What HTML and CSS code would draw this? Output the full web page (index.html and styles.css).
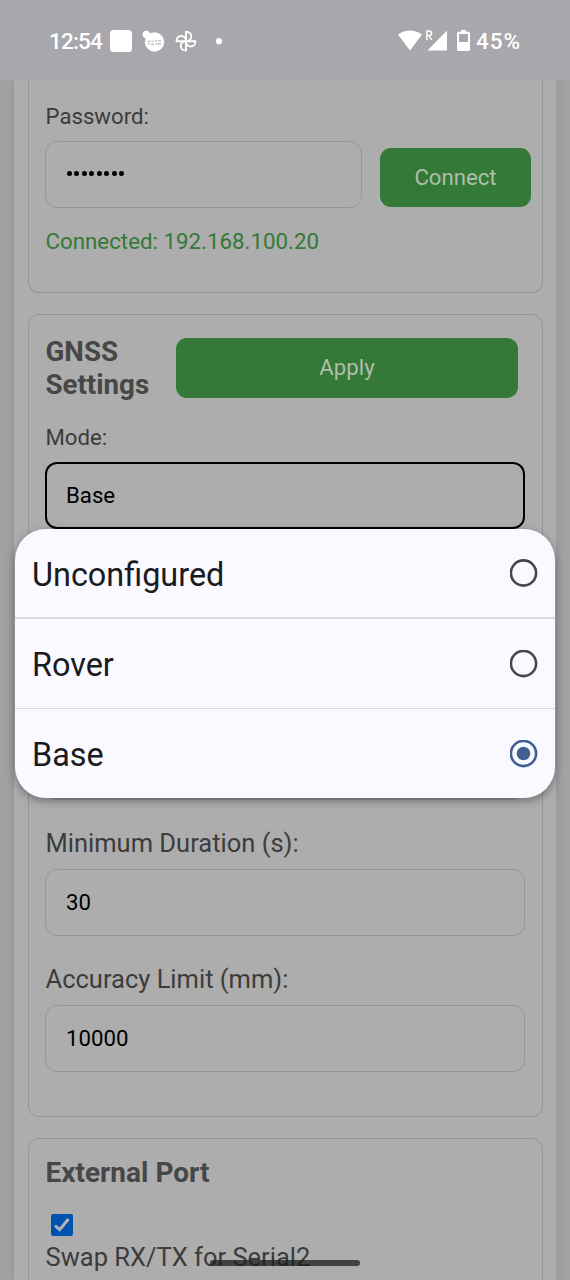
FILE: index.html
```html
<!DOCTYPE html>
<html lang="en">
<head>
<meta charset="utf-8">
<title>GNSS Settings</title>
<link rel="stylesheet" href="styles.css">
</head>
<body>
<div class="screen">
  <header class="status">
    <span class="clock">12:54</span>
    <svg class="notifications" width="120" height="30" viewBox="105 26 120 30" fill="#fff">
      <rect x="110" y="30" width="22" height="22" rx="3.5"/>
      <circle cx="154.500" cy="42" r="9.700"/>
      <circle cx="146.300" cy="34.500" r="3.700"/>
      <path d="M145 35L150 33L155 38L148 43Z"/>
      <path d="M147.500 41.200h3m1 0h2m1.500-.3h2m1 0h3M148 43.800h2m1 .4h3m1.500-.3h5.500" fill="none" stroke="#a8a7ac" stroke-width="1"/>
      <g fill="none" stroke="#fff" stroke-width="1.900" stroke-linejoin="round">
        <path d="M186 41.200V31.800C193 31.800 193 41.200 186 41.200Z"/>
        <path d="M186 41.200H195.400C195.400 48.200 186 48.200 186 41.200Z"/>
        <path d="M186 41.200V50.600C179 50.600 179 41.200 186 41.200Z"/>
        <path d="M186 41.200H176.600C176.600 34.200 186 34.200 186 41.200Z"/>
      </g>
      <circle cx="219" cy="41.200" r="3.100"/>
    </svg>
    <svg class="signals" width="75" height="30" viewBox="397 26 75 30" fill="#fff">
      <path d="M398 34.500Q410 26.500 422 34.500L410 50.500Z"/>
      <path d="M447 30.500V50.500H427.500Z"/>
      <path d="M426.900 40V31H429.200C432.300 31 432.300 35.500 429.200 35.500H426.900M429.200 35.500L431.600 40" fill="none" stroke="#fff" stroke-width="1.500"/>
      <path fill-rule="evenodd" d="M461 30H466V31.700H468.500Q470 31.700 470 33.200V49.500Q470 51 468.500 51H458.500Q457 51 457 49.500V33.200Q457 31.700 458.500 31.700H461ZM459 34V42H468V34Z"/>
    </svg>
    <span class="battery">45%</span>
  </header>

  <main class="panel">
    <section class="card card-wifi">
      <div class="label">Password:</div>
      <div class="connect-row">
        <div class="field password"><i></i><i></i><i></i><i></i><i></i><i></i><i></i><i></i></div>
        <div class="button connect">Connect</div>
      </div>
      <div class="connected">Connected: 192.168.100.20</div>
    </section>

    <section class="card card-gnss">
      <div class="title-row">
        <h2 class="title">GNSS Settings</h2>
        <div class="button apply">Apply</div>
      </div>
      <div class="label mode-label">Mode:</div>
      <div class="field focused">Base</div>
      <div class="field covered"></div>
      <div class="label wide">Minimum Duration (s):</div>
      <div class="field">30</div>
      <div class="label wide">Accuracy Limit (mm):</div>
      <div class="field">10000</div>
    </section>

    <section class="card card-port">
      <h2 class="title">External Port</h2>
      <svg class="checkbox" width="22" height="22" viewBox="0 0 22 22">
        <rect width="22" height="22" rx="2" fill="#0052ae"/>
        <path d="M4 11.700L8.700 15.700L17.500 5" fill="none" stroke="#b3b3b3" stroke-width="3"/>
      </svg>
      <div class="label swap">Swap RX/TX for Serial2</div>
    </section>
  </main>

  <div class="menu">
    <div class="option"><span>Unconfigured</span>
      <svg class="radio" width="28" height="28" viewBox="0 0 28 28"><circle cx="13.500" cy="14" r="12.600"/></svg></div>
    <div class="option"><span>Rover</span>
      <svg class="radio" width="28" height="28" viewBox="0 0 28 28"><circle cx="13.500" cy="13.500" r="12.600"/></svg></div>
    <div class="option"><span>Base</span>
      <svg class="radio selected" width="28" height="28" viewBox="0 0 28 28"><circle cx="13.500" cy="13.500" r="12.600"/><circle class="dot" cx="13.500" cy="13.500" r="6.800"/></svg></div>
  </div>
  <div class="nav-pill"></div>
</div>
</body>
</html>
```
FILE: styles.css
```css
* { box-sizing: border-box; }
body { margin: 0; font-family: Roboto, "Liberation Sans", sans-serif; }
.screen {
  position: relative;
  width: 570px;
  height: 1280px;
  overflow: hidden;
  background: #a2a2a2;
}
.status {
  position: relative;
  z-index: 1;
  display: flex;
  align-items: center;
  height: 80px;
  padding: 2px 48px 0 49px;
  background: #a8a7ac;
  color: #fff;
  font-size: 22.5px;
  font-weight: 500;
}
.clock { width: 56px; white-space: nowrap; letter-spacing: -.8px; }
.signals { margin-left: auto; }
.notifications, .signals { flex: none; }
.battery { width: 50px; padding-left: 4px; white-space: nowrap; letter-spacing: .9px; }
.panel {
  display: flex;
  flex-direction: column;
  gap: 21px;
  width: 542px;
  height: 1200px;
  margin-left: 14px;
  padding: 0 13px 0 14px;
  background: #adadad;
  box-shadow: 0 0 10px rgba(0, 0, 0, .1);
}
.card {
  flex: none;
  border: 1px solid #959595;
  border-radius: 11px;
  padding: 0 17px 0 16px;
}
.card-wifi { height: 213px; border-top: 0; border-radius: 0 0 11px 11px; padding-top: 23px; }
.card-gnss { height: 803px; padding-top: 20px; }
.card-port { height: 200px; padding-top: 17px; }
.label { height: 26px; line-height: 26px; padding-left: .5px; font-size: 22.2px; color: #3c3c3c; white-space: nowrap; }
.label.wide { height: 30px; line-height: 30px; font-size: 25.5px; margin: 28px 0 11px; }
.field {
  display: flex;
  align-items: center;
  height: 67px;
  padding: 0 0 2px 20px;
  border: 1px solid #959595;
  border-radius: 12px;
  font-size: 22.2px;
  color: #000;
}
.connect-row { display: flex; align-items: flex-end; gap: 18px; width: 486px; margin-top: 12px; }
.password { width: 317px; gap: 2.800px; padding-left: 21px; }
.password i { width: 4.700px; height: 4.700px; border-radius: 50%; background: #000; }
.button {
  display: flex;
  align-items: center;
  justify-content: center;
  padding-bottom: 2px;
  border-radius: 11px;
  background: #347937;
  color: #afbfaa;
  font-size: 22.2px;
}
.connect { width: 151px; height: 59px; margin-bottom: 1px; }
.connected { margin-top: 20px; padding-left: .5px; line-height: 26px; font-size: 22.3px; color: #347937; }
.title-row { display: flex; align-items: center; height: 66px; }
.title { margin: 0; padding-left: .5px; font-size: 28px; line-height: 33px; font-weight: 700; color: #474747; }
.title-row .title { width: 131px; font-size: 27.7px; }
.apply { width: 342px; height: 60px; }
.mode-label { margin: 23px 0 12px; }
.focused { border: 2.500px solid #000; padding-left: 19px; }
.covered { margin-top: 204px; border-bottom-width: 2px; }
.checkbox { display: block; margin: 25px 0 0 6px; }
.swap { margin-top: 8px; font-size: 25.5px; }
.menu {
  position: absolute;
  left: 15px;
  top: 529px;
  z-index: 2;
  width: 540px;
  height: 269px;
  border-radius: 31px;
  background: #faf9ff;
  box-shadow: 0 3px 9px rgba(0, 0, 0, .35);
}
.option {
  display: flex;
  align-items: center;
  justify-content: space-between;
  height: 90px;
  padding: 0 17px;
  border-bottom: 1px solid #d8d8de;
  font-size: 32.4px;
  color: #191b20;
}
.option span { padding-top: 2px; }
.option:first-child { border-bottom-width: 2px; }
.option:first-child span { padding-top: 3px; }
.option:last-child { height: 89px; border: 0; }
.radio { fill: none; stroke: #46474c; stroke-width: 2.600px; }
.radio.selected { stroke: #415f91; }
.radio .dot { fill: #415f91; stroke: none; }
.nav-pill {
  position: absolute;
  left: 210px;
  top: 1260px;
  z-index: 3;
  width: 150px;
  height: 6px;
  border-radius: 3px;
  background: rgba(30, 30, 30, .75);
}
```
